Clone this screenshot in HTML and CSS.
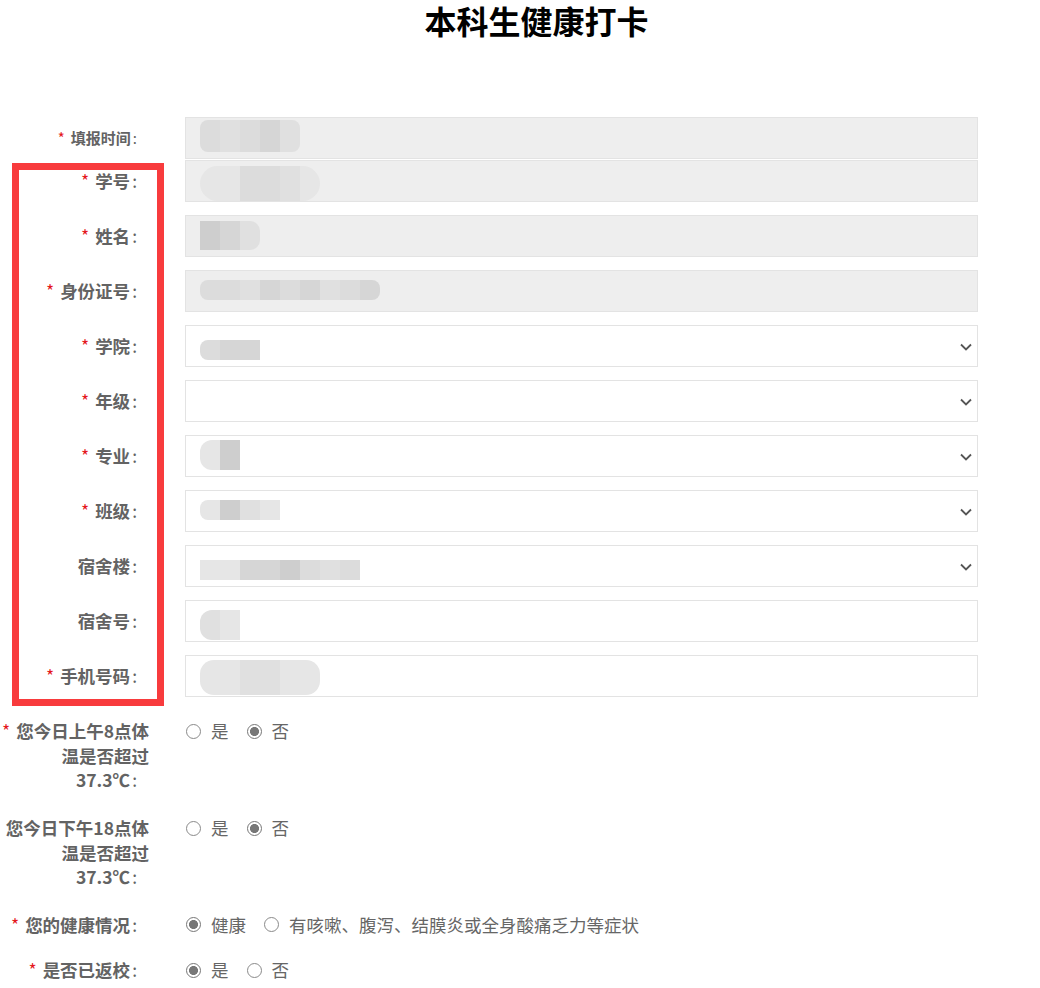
FILE: index.html
```html
<!DOCTYPE html>
<html lang="zh-CN">
<head>
<meta charset="utf-8">
<title>本科生健康打卡</title>
<link rel="stylesheet" href="styles.css">
</head>
<body>
<div class="page">
  <h1 class="title">本科生健康打卡</h1>
  <form class="form">
    <div class="row row-flush">
      <label class="lbl lbl-small"><span class="req">*</span>填报时间</label>
      <div class="field disabled"><span class="mz mz-time"><i class="g3"></i><i class="g2"></i><i class="g3"></i><i class="g4"></i><i class="g2"></i></span></div>
    </div>
    <div class="row">
      <label class="lbl"><span class="req">*</span>学号</label>
      <div class="field disabled"><span class="mz mz-id"><i class="g1"></i><i class="g1"></i><i class="g3"></i><i class="g3"></i><i class="g2"></i><i class="g1"></i></span></div>
    </div>
    <div class="row">
      <label class="lbl"><span class="req">*</span>姓名</label>
      <div class="field disabled"><span class="mz mz-name"><i class="g5"></i><i class="g4"></i><i class="g2"></i></span></div>
    </div>
    <div class="row">
      <label class="lbl"><span class="req">*</span>身份证号</label>
      <div class="field disabled"><span class="mz mz-card"><i class="g3"></i><i class="g3"></i><i class="g2"></i><i class="g4"></i><i class="g3"></i><i class="g4"></i><i class="g2"></i><i class="g3"></i><i class="g4"></i></span></div>
    </div>
    <div class="row">
      <label class="lbl"><span class="req">*</span>学院</label>
      <div class="field select"><span class="mz mz-college"><i class="g3"></i><i class="g4"></i><i class="g4"></i></span><svg class="chev" width="12" height="8" viewBox="0 0 12 8"><polyline points="1,1.5 6,6.5 11,1.5" fill="none" stroke="#555" stroke-width="1.8"/></svg></div>
    </div>
    <div class="row">
      <label class="lbl"><span class="req">*</span>年级</label>
      <div class="field select"><svg class="chev" width="12" height="8" viewBox="0 0 12 8"><polyline points="1,1.5 6,6.5 11,1.5" fill="none" stroke="#555" stroke-width="1.8"/></svg></div>
    </div>
    <div class="row">
      <label class="lbl"><span class="req">*</span>专业</label>
      <div class="field select"><span class="mz mz-major"><i class="g1 round-l"></i><i class="g5"></i></span><svg class="chev" width="12" height="8" viewBox="0 0 12 8"><polyline points="1,1.5 6,6.5 11,1.5" fill="none" stroke="#555" stroke-width="1.8"/></svg></div>
    </div>
    <div class="row">
      <label class="lbl"><span class="req">*</span>班级</label>
      <div class="field select"><span class="mz mz-class"><i class="g1"></i><i class="g5"></i><i class="g2"></i><i class="g1"></i></span><svg class="chev" width="12" height="8" viewBox="0 0 12 8"><polyline points="1,1.5 6,6.5 11,1.5" fill="none" stroke="#555" stroke-width="1.8"/></svg></div>
    </div>
    <div class="row">
      <label class="lbl">宿舍楼</label>
      <div class="field select"><span class="mz mz-dorm"><i class="g1"></i><i class="g1"></i><i class="g4"></i><i class="g4"></i><i class="g5"></i><i class="g3"></i><i class="g2"></i><i class="g3"></i></span><svg class="chev" width="12" height="8" viewBox="0 0 12 8"><polyline points="1,1.5 6,6.5 11,1.5" fill="none" stroke="#555" stroke-width="1.8"/></svg></div>
    </div>
    <div class="row">
      <label class="lbl">宿舍号</label>
      <div class="field"><span class="mz mz-room"><i class="g2 round-l"></i><i class="g1"></i></span></div>
    </div>
    <div class="row row-last">
      <label class="lbl"><span class="req">*</span>手机号码</label>
      <div class="field"><span class="mz mz-phone"><i class="g1"></i><i class="g1"></i><i class="g2"></i><i class="g2"></i><i class="g1"></i><i class="g1"></i></span></div>
    </div>

    <div class="row row-radio r-am">
      <label class="lbl"><span class="req">*</span>您今日上午8点体<br>温是否超过<br>37.3℃</label>
      <div class="options">
        <span class="opt"><span class="radio"></span>是</span>
        <span class="opt"><span class="radio checked"></span>否</span>
      </div>
    </div>
    <div class="row row-radio r-pm">
      <label class="lbl">您今日下午18点体<br>温是否超过<br>37.3℃</label>
      <div class="options">
        <span class="opt"><span class="radio"></span>是</span>
        <span class="opt"><span class="radio checked"></span>否</span>
      </div>
    </div>
    <div class="row row-radio r-health">
      <label class="lbl"><span class="req">*</span>您的健康情况</label>
      <div class="options">
        <span class="opt"><span class="radio checked"></span>健康</span>
        <span class="opt"><span class="radio"></span>有咳嗽、腹泻、结膜炎或全身酸痛乏力等症状</span>
      </div>
    </div>
    <div class="row row-radio">
      <label class="lbl"><span class="req">*</span>是否已返校</label>
      <div class="options">
        <span class="opt"><span class="radio checked"></span>是</span>
        <span class="opt"><span class="radio"></span>否</span>
      </div>
    </div>
  </form>
  <div class="annot"></div>
</div>
</body>
</html>
```

FILE: styles.css
```css
* { box-sizing: border-box; }

html, body {
  margin: 0;
  padding: 0;
  background: #fff;
}

body {
  font-family: "Noto Sans CJK SC", "Noto Sans", "Liberation Sans", sans-serif;
  color: #666;
}

.page {
  position: relative;
  width: 1040px;
  min-height: 988px;
  overflow: hidden;
}

.title {
  margin: 0 0 77px 0;
  padding-left: 33px;
  text-align: center;
  font-size: 32px;
  line-height: 40px;
  font-weight: 700;
  color: #000;
}

.form {
  display: flex;
  flex-direction: column;
}

.row {
  display: grid;
  grid-template-columns: 149px 793px;
  column-gap: 36px;
  align-items: center;
  margin-bottom: 13px;
}

.row-flush { margin-bottom: 1px; }
.row-last { margin-bottom: 22px; }

.row-radio {
  align-items: start;
  margin-bottom: 22px;
}

.r-am { margin-bottom: 23.5px; }
.r-pm { margin-bottom: 23px; }
.r-health { margin-bottom: 21px; }

.lbl {
  text-align: right;
  font-size: 17.5px;
  line-height: 24.5px;
  font-weight: 700;
  color: #636363;
}

.lbl-small {
  font-size: 15px;
}

.lbl::after {
  content: ":";
  font-weight: 400;
  margin: 0 12px 0 2px;
}

.req {
  color: #e4161b;
  font-weight: 400;
  margin-right: 6px;
}

.field {
  position: relative;
  height: 42px;
  border: 1px solid #e3e3e3;
  background: #fff;
  display: flex;
  align-items: flex-start;
  padding-left: 14px;
}

.field.disabled {
  background: #eeeeee;
}

.chev {
  position: absolute;
  right: 5px;
  top: 17px;
}

.mz {
  display: flex;
  overflow: hidden;
}

.mz i {
  display: block;
  width: 20px;
  height: 100%;
}

.g1 { background: #e6e6e6; }
.g2 { background: #e0e0e0; }
.g3 { background: #dcdcdc; }
.g4 { background: #d6d6d6; }
.g5 { background: #cecece; }

.round-l { border-radius: 12px 0 0 12px; }

.mz-time { margin-top: 2px; height: 32px; border-radius: 8px; }
.mz-id { margin-top: 5px; height: 35px; border-radius: 18px; filter: blur(0.6px); }
.mz-name { margin-top: 5px; height: 29px; border-radius: 0 10px 10px 0; }
.mz-card { margin-top: 9px; height: 20px; border-radius: 8px; }
.mz-college { margin-top: 14px; height: 20px; border-radius: 8px 0 0 8px; }
.mz-major { margin-top: 4px; height: 30px; }
.mz-class { margin-top: 9px; height: 20px; border-radius: 8px 0 0 8px; }
.mz-dorm { margin-top: 14px; height: 20px; }
.mz-room { margin-top: 9px; height: 30px; }
.mz-phone { margin-top: 4px; height: 35px; border-radius: 14px; }

.options {
  display: flex;
  align-items: center;
  padding-left: 1px;
  font-size: 17.5px;
  line-height: 24.5px;
  color: #666;
}

.opt {
  display: inline-flex;
  align-items: center;
  gap: 10px;
  margin-right: 18px;
  white-space: nowrap;
}

.radio {
  display: inline-block;
  width: 15px;
  height: 15px;
  border: 1px solid #8a8a8a;
  border-radius: 50%;
  background: #fff;
}

.radio.checked {
  border-color: #777;
  background: radial-gradient(circle, #777 0 4.2px, #fff 4.8px);
}

.annot {
  position: absolute;
  left: 12px;
  top: 163px;
  width: 152px;
  height: 543px;
  border: 7px solid #f83b3d;
}
```
